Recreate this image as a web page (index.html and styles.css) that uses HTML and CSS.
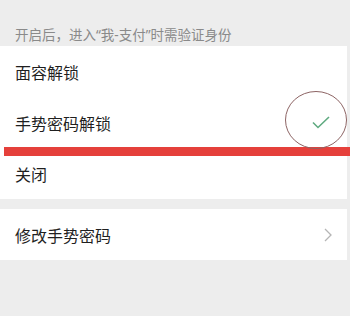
FILE: index.html
```html
<!DOCTYPE html>
<html lang="zh-CN">
<head>
<meta charset="utf-8">
<link rel="stylesheet" href="styles.css">
</head>
<body>
<div class="page">
  <p class="hint">开启后，进入“我-支付”时需验证身份</p>
  <div class="card">
    <div class="row">面容解锁</div>
    <div class="row">
      <span class="label">手势密码解锁</span>
      <svg class="check" width="18" height="13" viewBox="0 0 18 13"><path d="M1 6.5 L6 11.5 L17 1" fill="none" stroke="#5faa80" stroke-width="1.6"/></svg>
    </div>
    <div class="row">关闭</div>
  </div>
  <div class="card second">
    <div class="row">
      <span class="label">修改手势密码</span>
      <svg class="chev" width="8" height="14" viewBox="0 0 8 14"><path d="M1 1 L7 7 L1 13" fill="none" stroke="#b5b5b5" stroke-width="1.3"/></svg>
    </div>
  </div>
  <div class="redbar"></div>
  <svg class="circle" width="64" height="62" viewBox="0 0 64 62"><ellipse cx="32" cy="31" rx="30.5" ry="28.5" fill="none" stroke="#8d6464" stroke-width="1"/></svg>
</div>
</body>
</html>
```

FILE: styles.css
```css
html, body {
  margin: 0;
  padding: 0;
  background: #ededed;
}
.page {
  position: relative;
  width: 350px;
  height: 316px;
  overflow: hidden;
  font-family: "Noto Sans", "Noto Sans CJK SC", sans-serif;
}
.hint {
  margin: 26px 0 2px;
  padding: 0 15px;
  font-size: 13.5px;
  line-height: 18px;
  color: #8a8a8a;
}
.card {
  width: 347px;
  background: #fff;
}
.card.second {
  margin-top: 10px;
}
.row {
  height: 51px;
  display: flex;
  align-items: center;
  justify-content: space-between;
  padding: 0 17px 0 15px;
  font-size: 16px;
  color: #1f1f1f;
}
.second .row {
  padding-right: 15px;
}
.check {
  display: block;
}
.chev {
  display: block;
}
.redbar {
  position: absolute;
  left: 4px;
  right: 0;
  top: 147px;
  height: 9px;
  background: #e5403b;
}
.circle {
  position: absolute;
  left: 284px;
  top: 89px;
}
```
